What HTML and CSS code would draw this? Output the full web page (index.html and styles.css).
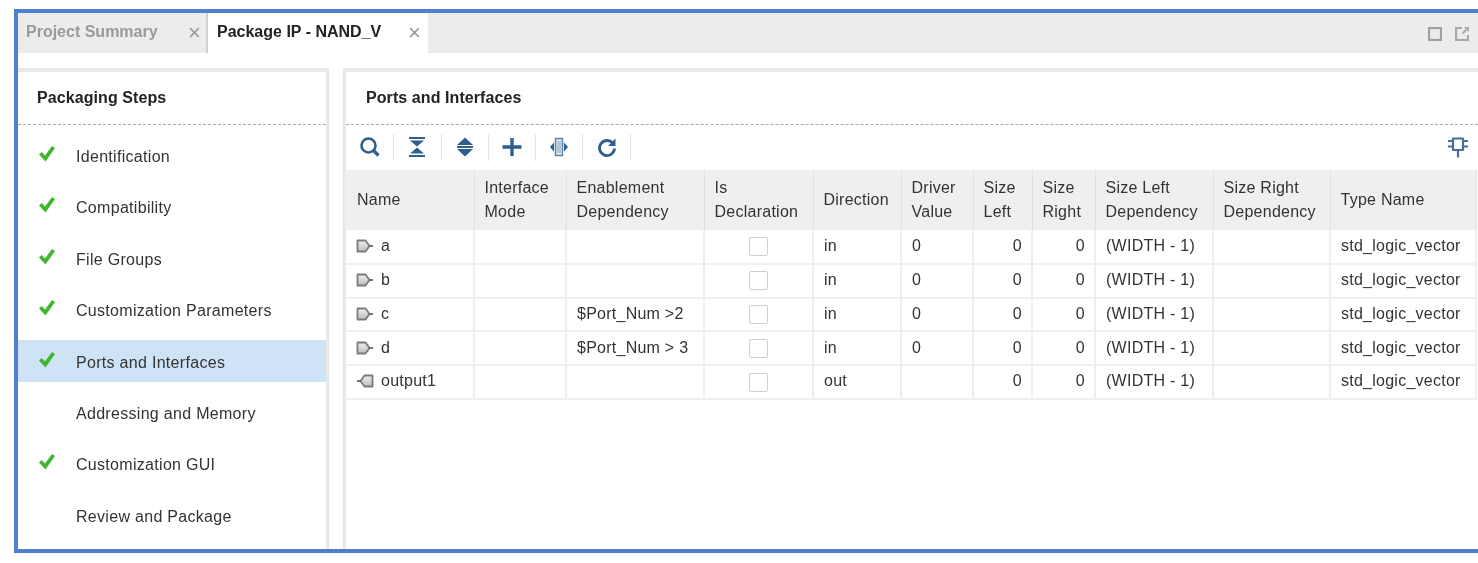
FILE: index.html
```html
<!DOCTYPE html>
<html lang="en">
<head>
<meta charset="utf-8">
<title>Package IP - NAND_V</title>
<link rel="stylesheet" href="styles.css">
</head>
<body>
<svg class="defs" width="0" height="0" aria-hidden="true">
  <defs>
    <linearGradient id="portfill" x1="0" y1="0" x2="0" y2="1"><stop offset="0" stop-color="#efefef"/><stop offset="1" stop-color="#bdbdbd"/></linearGradient>
    <symbol id="check" viewBox="0 0 18 18"><path d="M1 9.500 3.700 7 7 10.500 14 1l3 2L7.500 16.500z" fill="#40b52f"/></symbol>
    <symbol id="in" viewBox="0 0 18 14"><path d="M1.500 1.500h8l4 5.500-4 5.500h-8z" fill="url(#portfill)" stroke="#7a7a7a" stroke-width="1.800" stroke-linejoin="round"/><path d="M13 7h4" stroke="#555" stroke-width="1.600"/></symbol>
    <symbol id="out" viewBox="0 0 18 14"><path d="M16.500 1.500h-8l-4 5.500 4 5.500h8z" fill="url(#portfill)" stroke="#7a7a7a" stroke-width="1.800" stroke-linejoin="round"/><path d="M5 7H1" stroke="#555" stroke-width="1.600"/></symbol>
  </defs>
</svg>
<main class="frame">
  <header class="tabbar">
    <div class="tab tab-idle"><span class="tab-label">Project Summary</span><span class="tab-x">×</span></div>
    <div class="tab tab-active"><span class="tab-label">Package IP - NAND_V</span><span class="tab-x">×</span></div>
    <div class="win-btns">
      <svg class="win-icon" viewBox="0 0 14 14"><rect x="1" y="1" width="12" height="12" fill="none" stroke="#a0a0a0" stroke-width="2.200"/></svg>
      <svg class="win-icon" viewBox="0 0 14 14"><path d="M7 1H1v12h12V8" fill="none" stroke="#a8a8a8" stroke-width="2.200"/><path d="M7.500 6.500 11.500 2.500" stroke="#a8a8a8" stroke-width="1.800"/><path d="M9 0h5v5z" fill="#a8a8a8"/></svg>
    </div>
  </header>
  <div class="body">
    <aside class="steps">
      <h2 class="panel-title">Packaging Steps</h2>
      <ul class="step-list">
        <li class="step"><svg class="check"><use href="#check"/></svg><span>Identification</span></li>
        <li class="step"><svg class="check"><use href="#check"/></svg><span>Compatibility</span></li>
        <li class="step"><svg class="check"><use href="#check"/></svg><span>File Groups</span></li>
        <li class="step"><svg class="check"><use href="#check"/></svg><span>Customization Parameters</span></li>
        <li class="step step-selected"><svg class="check"><use href="#check"/></svg><span>Ports and Interfaces</span></li>
        <li class="step"><span class="check"></span><span>Addressing and Memory</span></li>
        <li class="step"><svg class="check"><use href="#check"/></svg><span>Customization GUI</span></li>
        <li class="step"><span class="check"></span><span>Review and Package</span></li>
      </ul>
    </aside>
    <section class="content">
      <h2 class="panel-title panel-title-right">Ports and Interfaces</h2>
      <div class="toolbar">
        <span class="tool"><svg viewBox="0 0 22 22"><circle cx="9.500" cy="9.500" r="7" fill="none" stroke="#2f5f8f" stroke-width="2.600"/><path d="M14.500 14.500l5 5" stroke="#2f5f8f" stroke-width="3.200"/></svg></span>
        <span class="tool"><svg viewBox="0 0 22 22"><path d="M3 2h16M3 20h16" stroke="#2f5f8f" stroke-width="2"/><path d="M4 4.500h14l-7 6zM4 17.500h14l-7-6z" fill="#2f5f8f"/></svg></span>
        <span class="tool"><svg viewBox="0 0 22 22"><path d="M11 1.500l8 7.500H3zM11 20.500l8-7.500H3z" fill="#2f5f8f"/><path d="M3 11h16" stroke="#2f5f8f" stroke-width="2"/></svg></span>
        <span class="tool"><svg viewBox="0 0 22 22"><path d="M11 2v18M1.500 11h19" stroke="#2f5f8f" stroke-width="3.400"/></svg></span>
        <span class="tool"><svg viewBox="0 0 22 22"><rect x="7.500" y="2.500" width="7" height="17" fill="#dfe6ee" stroke="#5f86a8" stroke-width="1.500"/><path d="M10 5v12M12 5v12" stroke="#8aa6bf" stroke-width="1"/><path d="M6 6.500 2 11l4 4.500zM16 6.500l4 4.500-4 4.500z" fill="#2f5f8f"/></svg></span>
        <span class="tool"><svg viewBox="0 0 22 22"><path d="M17 7.500A7.500 7.500 0 1 0 18.500 12.500" fill="none" stroke="#2f5f8f" stroke-width="2.800"/><path d="M19.500 2.500v7.500H12z" fill="#2f5f8f"/></svg></span>
        <svg class="pin" viewBox="0 0 22 22"><path d="M6 2.500h10v11.500H6z" fill="#fff" stroke="#4a6f9c" stroke-width="2.200" stroke-linejoin="round"/><path d="M1 5h5M16 5h5M1 10.500h5M16 10.500h5" stroke="#4a6f9c" stroke-width="2"/><path d="M11 14v7.500" stroke="#4a6f9c" stroke-width="2.200"/></svg>
      </div>
      <table class="grid">
        <colgroup>
          <col class="c1"><col class="c2"><col class="c3"><col class="c4"><col class="c5"><col class="c6"><col class="c7"><col class="c8"><col class="c9"><col class="c10"><col class="c11">
        </colgroup>
        <thead>
          <tr>
            <th>Name</th><th>Interface<br>Mode</th><th>Enablement<br>Dependency</th><th>Is<br>Declaration</th><th>Direction</th><th>Driver<br>Value</th><th>Size<br>Left</th><th>Size<br>Right</th><th>Size Left<br>Dependency</th><th>Size Right<br>Dependency</th><th>Type Name</th>
          </tr>
        </thead>
        <tbody>
          <tr><td><span class="port"><svg class="port-icon"><use href="#in"/></svg>a</span></td><td></td><td></td><td class="center"><span class="box"></span></td><td>in</td><td>0</td><td class="num">0</td><td class="num">0</td><td>(WIDTH - 1)</td><td></td><td>std_logic_vector</td></tr>
          <tr><td><span class="port"><svg class="port-icon"><use href="#in"/></svg>b</span></td><td></td><td></td><td class="center"><span class="box"></span></td><td>in</td><td>0</td><td class="num">0</td><td class="num">0</td><td>(WIDTH - 1)</td><td></td><td>std_logic_vector</td></tr>
          <tr><td><span class="port"><svg class="port-icon"><use href="#in"/></svg>c</span></td><td></td><td>$Port_Num &gt;2</td><td class="center"><span class="box"></span></td><td>in</td><td>0</td><td class="num">0</td><td class="num">0</td><td>(WIDTH - 1)</td><td></td><td>std_logic_vector</td></tr>
          <tr><td><span class="port"><svg class="port-icon"><use href="#in"/></svg>d</span></td><td></td><td>$Port_Num &gt; 3</td><td class="center"><span class="box"></span></td><td>in</td><td>0</td><td class="num">0</td><td class="num">0</td><td>(WIDTH - 1)</td><td></td><td>std_logic_vector</td></tr>
          <tr><td><span class="port"><svg class="port-icon"><use href="#out"/></svg>output1</span></td><td></td><td></td><td class="center"><span class="box"></span></td><td>out</td><td></td><td class="num">0</td><td class="num">0</td><td>(WIDTH - 1)</td><td></td><td>std_logic_vector</td></tr>
        </tbody>
      </table>
    </section>
  </div>
</main>
</body>
</html>
```

FILE: styles.css
```css
* { box-sizing: border-box; }
html, body { margin: 0; height: 100%; overflow: hidden; background: #fff; }
body { font-family: "Liberation Sans", Arial, sans-serif; font-size: 16px; color: #333; }
.defs { position: absolute; }

.frame {
  margin: 9px 0 0 14px;
  width: 1468px;
  height: 544px;
  border: 4px solid #4f7fd3;
  display: flex;
  flex-direction: column;
  filter: blur(0.45px);
}

.tabbar { flex: 0 0 40px; display: flex; background: #ececec; }
.tab { display: flex; align-items: center; height: 40px; position: relative; }
.tab-idle { width: 190px; padding-left: 8px; border-right: 2px solid #d0d0d0; color: #9a9a9a; }
.tab-active { width: 220px; padding-left: 9px; background: #fff; color: #222; }
.tab-label { font-weight: 700; padding-bottom: 3px; }
.tab-x { position: absolute; top: 6px; font-size: 22px; font-weight: 400; color: #999; line-height: 28px; }
.tab-idle .tab-x { left: 170px; }
.tab-active .tab-x { left: 200px; }
.win-btns { margin-left: auto; margin-right: 9px; padding-top: 2px; display: flex; gap: 13px; align-items: center; }
.win-icon { width: 14px; height: 14px; }

.body { flex: 1; display: flex; padding-top: 15px; gap: 14px; min-height: 0; }
.steps { flex: 0 0 311px; border-top: 4px solid #e9e9e9; border-right: 3px solid #e9e9e9; }
.content { flex: 1; min-width: 0; border-top: 4px solid #e9e9e9; border-left: 3px solid #e9e9e9; }

.panel-title {
  margin: 0;
  height: 53px;
  padding: 0 0 1px 19px;
  display: flex;
  align-items: center;
  font-size: 16px;
  font-weight: 700;
  letter-spacing: 0.08px;
  color: #222;
  border-bottom: 1px dashed #a8a8a8;
}
.panel-title-right { padding-left: 20px; }

.step-list { list-style: none; margin: 9px 0 0; padding: 0; display: flex; flex-direction: column; gap: 9.400px; letter-spacing: 0.3px; }
.step { height: 42px; display: flex; align-items: center; padding: 4px 0 0 20px; }
.step-selected { background: #cfe3f7; }
.check { width: 18px; height: 18px; margin: 0 20px 6px 0; flex: none; }

.toolbar { height: 45px; display: flex; align-items: center; padding: 0 0 1px 1px; position: relative; }
.tool { width: 47.300px; height: 27px; display: flex; align-items: center; justify-content: center; border-right: 1px solid #e4e4e4; }
.tool svg { width: 22px; height: 22px; }
.pin { width: 22px; height: 22px; margin-left: auto; margin-right: 9px; }

.grid { border-collapse: collapse; table-layout: fixed; width: 1130px; letter-spacing: 0.25px; }
.c1 { width: 128px; } .c2 { width: 92px; } .c3 { width: 138px; } .c4 { width: 109px; }
.c5 { width: 88px; } .c6 { width: 72px; } .c7 { width: 59px; } .c8 { width: 63px; }
.c9 { width: 118px; } .c10 { width: 117px; } .c11 { width: 146px; }

.grid th {
  height: 60px;
  padding: 0 0 0 10px;
  background: #efefef;
  border-right: 1px solid #e2e2e2;
  font-weight: 400;
  font-size: 16px;
  line-height: 24px;
  text-align: left;
  color: #333;
}
.grid td {
  height: 33.750px;
  padding: 0 10px 1px;
  border-right: 2px solid #efefef;
  border-bottom: 2px solid #efefef;
  white-space: nowrap;
  color: #333;
}
.grid th:first-child, .grid td:first-child { padding-left: 11px; }
.grid .num { text-align: right; padding-right: 9px; }
.grid .center { text-align: center; padding: 0; }
.port { display: flex; align-items: center; gap: 7px; margin-left: -1px; }
.port-icon { width: 18px; height: 14px; flex: none; }
.box { display: inline-block; width: 19px; height: 19px; border: 1px solid #cfcfcf; border-radius: 2px; background: #fff; vertical-align: middle; }
```
